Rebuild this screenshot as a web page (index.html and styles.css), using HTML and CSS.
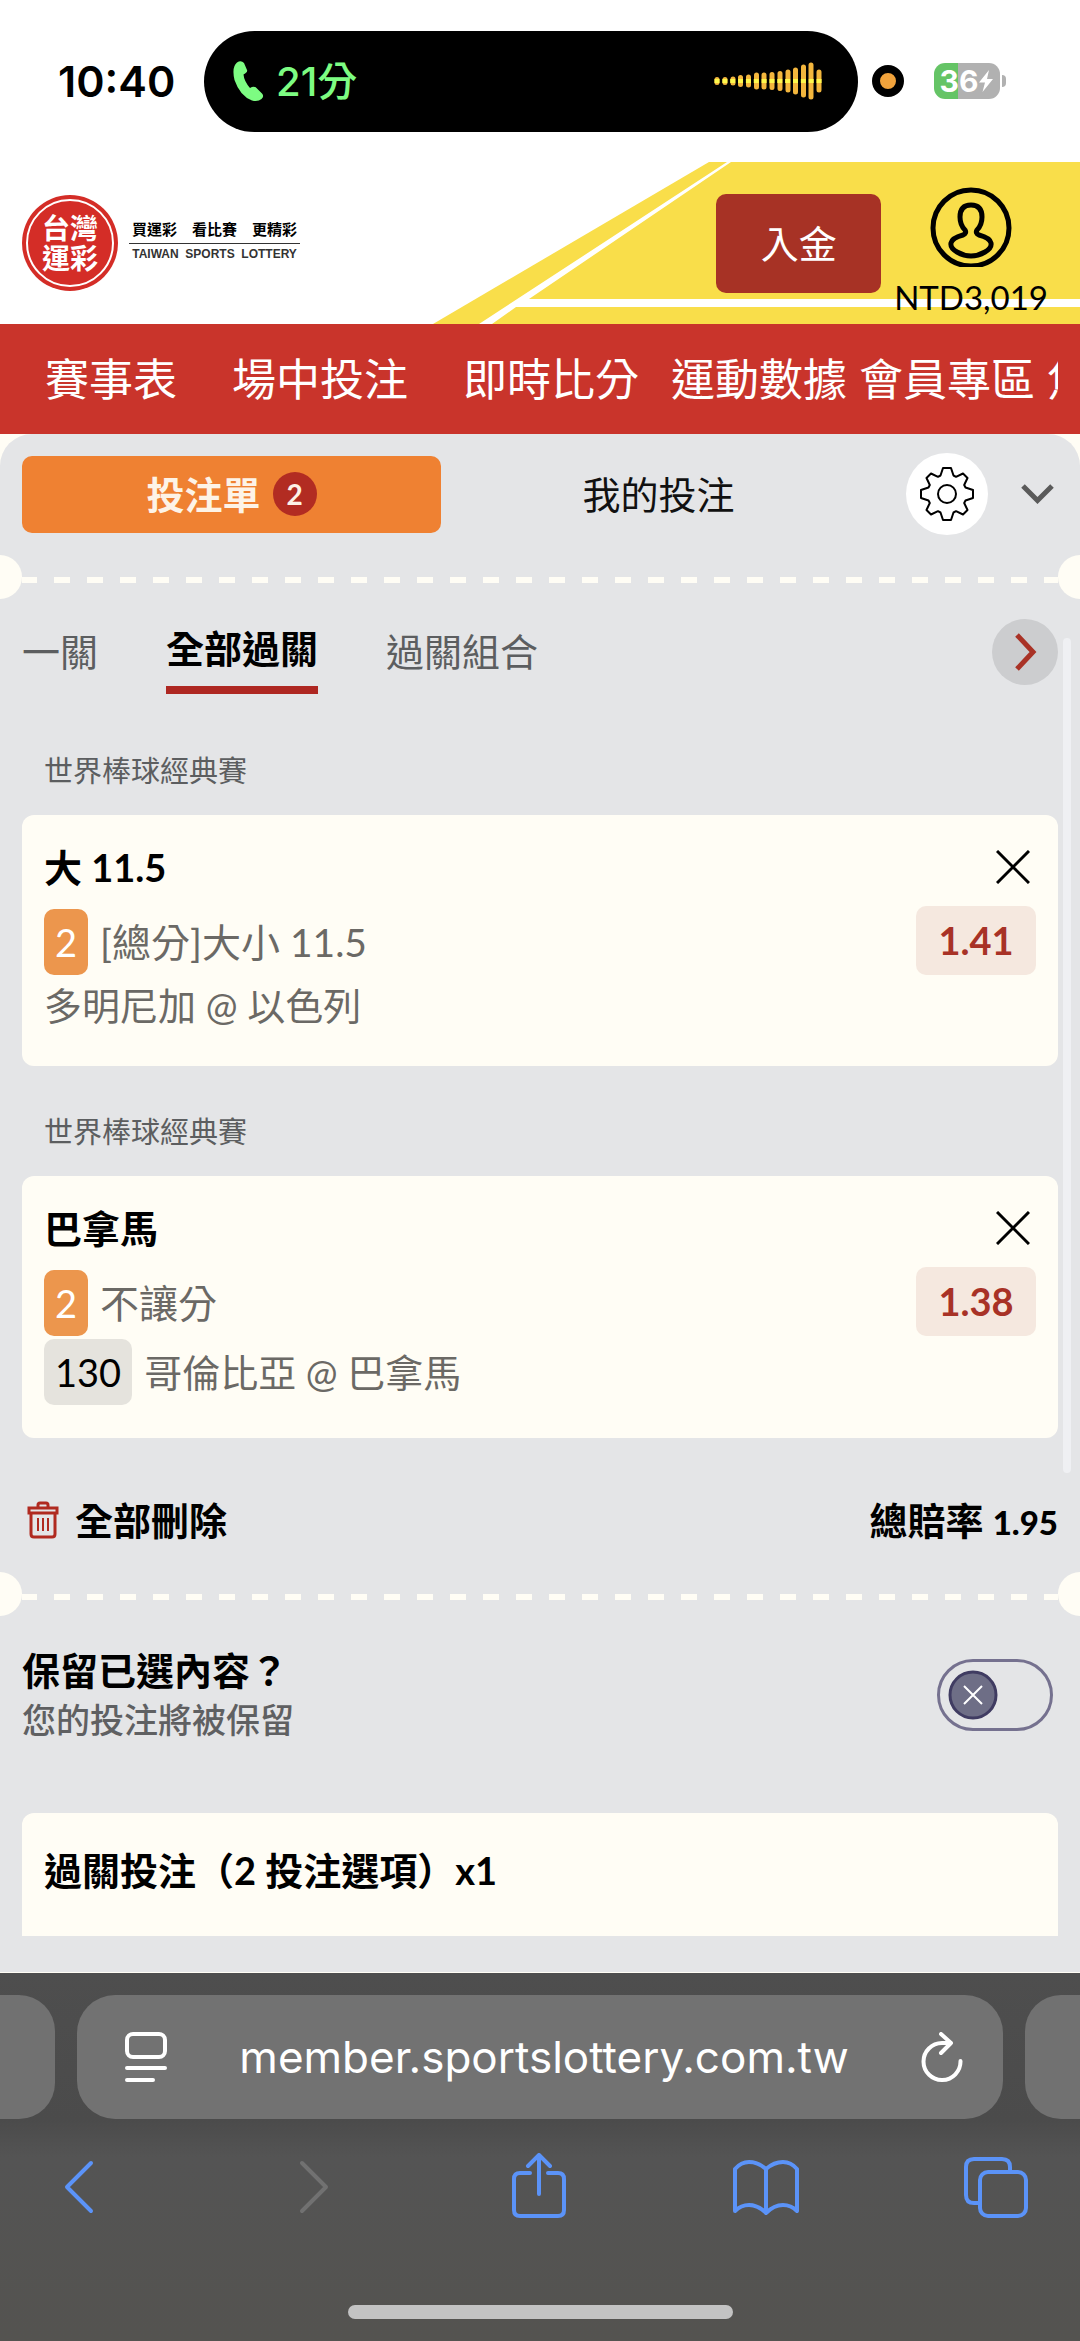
FILE: index.html
```
<!DOCTYPE html>
<html lang="zh-Hant">
<head>
  <meta charset="UTF-8">
  <meta name="viewport" content="width=device-width, initial-scale=1.0">
  <title>台灣運彩 投注單</title>
  <link rel="stylesheet" href="styles.css">
</head>
<body>
  <div class="status-bar">
    <span class="clock">10:40</span>
    <div class="island">
      <svg class="phone-icon" width="31" height="40" viewBox="0 0 31 40"><path fill="#7dfc82" d="M4 1.500Q8-1 11 2L14 9Q15 11 10.500 13.500Q11 20 17 27Q21 24.500 23.500 27L29 32.500Q31.500 35 28.500 38Q25 41 19 39.500Q7 35 1.500 19Q-1.500 6 4 1.500Z"/></svg>
      <span class="call-time">21分</span>
      <svg class="wave" width="108" height="38" viewBox="0 0 108 38">
        <path stroke="#f3b63d" stroke-width="5" stroke-linecap="round" d="M3 17.500v3M11 17.500v3M19 17v4M26.500 15.500v7M34.500 15v8M42.500 13v12M50 13v12M58 12.500v13M66 11.500v15M74 10v18M81.500 8v22M89.500 5v28M97 3v32M105 10v18"/>
        <path stroke="#fdf84c" stroke-width="4" stroke-dasharray="5 2.850" d="M0.500 19H108"/>
      </svg>
    </div>
    <span class="mic-dot"></span>
    <div class="battery"><span>36</span><svg width="16" height="24" viewBox="0 0 16 24"><path fill="#fff" d="M11 1 1 13.500h6L4.500 23 15 10H9Z"/></svg></div>
    <span class="battery-tip"></span>
  </div>

  <header class="site-header">
    <svg class="header-art" width="1080" height="162" viewBox="0 0 1080 162">
      <path fill="#f9de4a" d="M709 0H1080V162H433Z"/>
      <path fill="#fff" d="M727 0h4L529 137H1080v8H516L492 162H479Z"/>
    </svg>
    <a class="logo" href="#">
      <span class="seal"><span class="seal-ring">台灣<br>運彩</span></span>
      <span class="slogan">
        <span class="slogan-zh"><b>買運彩</b><b>看比賽</b><b>更精彩</b></span>
        <span class="slogan-en">TAIWAN&nbsp; SPORTS&nbsp; LOTTERY</span>
      </span>
    </a>
    <button class="deposit">入金</button>
    <a class="account" href="#">
      <svg width="82" height="80" viewBox="0 0 82 80" fill="none" stroke="#000" stroke-width="5">
        <circle cx="41" cy="41" r="38"/>
        <path stroke-linejoin="round" d="M41 18Q30 18 30 30Q30 38 35 43Q37 46 33 48Q22 51 21 56Q20 61 27 65Q34 69 41 69Q48 69 55 65Q62 61 61 56Q60 51 49 48Q45 46 47 43Q52 38 52 30Q52 18 41 18Z"/>
      </svg>
      <span>NTD3,019</span>
    </a>
  </header>

  <nav class="main-nav">
    <div class="nav-scroll">
      <a class="wide" href="#">賽事表</a>
      <a class="wide" href="#">場中投注</a>
      <a href="#">即時比分</a>
      <a href="#">運動數據</a>
      <a href="#">會員專區</a>
      <a href="#">焦點賽事</a>
    </div>
  </nav>

  <main class="slip-wrap">
    <div class="slip">
      <div class="slip-head">
        <div class="slip-tabs">
          <button class="slip-tab active">投注單<span class="count">2</span></button>
          <button class="slip-tab">我的投注</button>
        </div>
        <button class="settings" aria-label="設定">
          <svg width="56" height="56" viewBox="-28 -28 56 56" fill="none" stroke="#000" stroke-width="2" stroke-linejoin="round">
            <circle r="9"/>
            <path d="M-4-26H4L6.500-18.500 9-17.200 16-20.500 20.500-16 17.200-9 18.500-6.500 26-4V4L18.500 6.500 17.200 9 20.500 16 16 20.500 9 17.200 6.500 18.500 4 26H-4L-6.500 18.500-9 17.200-16 20.500-20.500 16-17.200 9-18.500 6.500-26 4V-4L-18.500-6.500-17.200-9-20.500-16-16-20.500-9-17.200-6.500-18.500Z"/>
          </svg>
        </button>
        <button class="collapse" aria-label="收合">
          <svg width="33" height="20" viewBox="0 0 33 20" fill="none" stroke="#5a5a5a" stroke-width="5"><path d="M2 2 16.500 16.500 31 2"/></svg>
        </button>
      </div>

      <div class="perforation"><span></span></div>

      <section class="legs">
        <div class="pass-tabs">
          <button class="pass-tab">一關</button>
          <button class="pass-tab active">全部過關</button>
          <button class="pass-tab">過關組合</button>
          <button class="next" aria-label="下一頁">
            <svg width="24" height="38" viewBox="0 0 24 38" fill="none" stroke="#a93226" stroke-width="5"><path d="M4 2 20 19 4 36"/></svg>
          </button>
        </div>

        <h3 class="league">世界棒球經典賽</h3>
        <article class="leg">
          <div class="leg-info">
            <h4>大 11.5</h4>
            <p class="market"><span class="tag">2</span>[總分]大小 11.5</p>
            <p class="teams">多明尼加 @ 以色列</p>
          </div>
          <div class="leg-side">
            <button class="remove" aria-label="刪除"><svg width="34" height="34" viewBox="0 0 34 34" stroke="#000" stroke-width="3"><path d="M1 1 33 33M33 1 1 33"/></svg></button>
            <span class="odds">1.41</span>
          </div>
        </article>

        <h3 class="league">世界棒球經典賽</h3>
        <article class="leg">
          <div class="leg-info">
            <h4>巴拿馬</h4>
            <p class="market"><span class="tag">2</span>不讓分</p>
            <p class="match"><span class="tag code">130</span>哥倫比亞 @ 巴拿馬</p>
          </div>
          <div class="leg-side">
            <button class="remove" aria-label="刪除"><svg width="34" height="34" viewBox="0 0 34 34" stroke="#000" stroke-width="3"><path d="M1 1 33 33M33 1 1 33"/></svg></button>
            <span class="odds">1.38</span>
          </div>
        </article>
        <span class="scroll-thumb"></span>
      </section>

      <div class="summary">
        <button class="delete-all">
          <svg width="32" height="38" viewBox="0 0 32 38" fill="none" stroke="#b02a20" stroke-width="3">
            <path d="M11 6V4Q11 2 13 2H19Q21 2 21 4V6M2 7H30V12H2ZM4 12V33Q4 36 7 36H25Q28 36 28 33V12"/>
            <path stroke-width="2" d="M11 17V30M16 17V30M21 17V30"/>
          </svg>
          全部刪除
        </button>
        <span class="total">總賠率 <b>1.95</b></span>
      </div>

      <div class="perforation"><span></span></div>

      <div class="keep">
        <label for="keepPicks">
          <strong>保留已選內容？</strong>
          <span>您的投注將被保留</span>
        </label>
        <div class="switch">
          <input type="checkbox" id="keepPicks">
          <svg class="knob" width="50" height="50" viewBox="0 0 50 50">
            <circle cx="25" cy="25" r="23" fill="#6e6e86" stroke="#403c62" stroke-width="3"/>
            <path stroke="#fff" stroke-width="2" d="M16 16 34 34M34 16 16 34"/>
          </svg>
        </div>
      </div>

      <div class="stake"><h4>過關投注（2 投注選項）x1</h4></div>
    </div>
  </main>

  <footer class="browser">
    <div class="address-row">
      <span class="side-page left"></span>
      <div class="address">
        <button aria-label="網頁選單">
          <svg width="42" height="50" viewBox="0 0 42 50" fill="none" stroke="#fff" stroke-width="4" stroke-linecap="round"><rect x="2" y="2" width="38" height="23" rx="6"/><path d="M2 36H40M2 48H28"/></svg>
        </button>
        <span class="url">member.sportslottery.com.tw</span>
        <button aria-label="重新載入">
          <svg width="42" height="50" viewBox="0 0 42 50" fill="none" stroke="#fff" stroke-width="4" stroke-linecap="round" stroke-linejoin="round"><path d="M30 11H21A18.500 18.500 0 1 0 39.500 29M20 2 30 11 20 21"/></svg>
        </button>
      </div>
      <span class="side-page right"></span>
    </div>
    <div class="toolbar">
      <button aria-label="上一頁"><svg width="70" height="66" viewBox="0 0 70 66"><path d="M47 10 23 34 47 58"/></svg></button>
      <button aria-label="下一頁" class="off"><svg width="70" height="66" viewBox="0 0 70 66"><path d="M29 10 53 34 29 58"/></svg></button>
      <button aria-label="分享"><svg width="70" height="66" viewBox="0 0 70 66"><path d="M28 20H18Q12 20 12 26V57Q12 63 18 63H56Q62 63 62 57V26Q62 20 56 20H46M37 41V3M26 13 37 2 48 13"/></svg></button>
      <button aria-label="書籤"><svg width="70" height="66" viewBox="0 0 70 66"><path d="M35 16Q27 9 18 9Q10 9 4 16V58Q10 52 18 52Q27 52 35 60Q43 52 52 52Q60 52 66 58V16Q60 9 52 9Q43 9 35 16V60"/></svg></button>
      <button aria-label="分頁"><svg width="70" height="66" viewBox="0 0 70 66"><path d="M50 17V14Q50 6 42 6H14Q6 6 6 14V42Q6 50 14 50H19"/><rect x="20" y="19" width="46" height="44" rx="8"/></svg></button>
    </div>
    <div class="home-indicator"></div>
  </footer>
</body>
</html>
```

FILE: styles.css
```
* {
  box-sizing: border-box;
}

body {
  margin: 0;
  min-height: 100vh;
  display: flex;
  flex-direction: column;
  background-color: #fff;
  color: #000;
  font-family: Lato, "Noto Sans CJK TC", sans-serif;
  font-size: 38px;
}

button {
  border: none;
  padding: 0;
  background: none;
  color: inherit;
  font: inherit;
  cursor: pointer;
}

a {
  color: inherit;
  text-decoration: none;
}

h3, h4, p {
  margin: 0;
}

svg {
  display: block;
  flex-shrink: 0;
}

/* phone status bar */
.status-bar {
  display: flex;
  align-items: center;
  height: 162px;
  padding: 0 74px 0 58px;
  font-family: Inter, "Noto Sans CJK TC", sans-serif;
}

.clock {
  width: 146px;
  font-size: 43px;
  font-weight: 600;
}

.island {
  flex: 1;
  display: flex;
  align-items: center;
  height: 101px;
  padding: 0 36px 0 29px;
  border-radius: 51px;
  background-color: #000;
}

.call-time {
  margin-left: 12px;
  padding-bottom: 4px;
  color: #7dfc82;
  font-size: 40px;
  font-weight: 500;
}

.wave {
  margin-left: auto;
}

.mic-dot {
  width: 32px;
  height: 32px;
  margin-left: 14px;
  border: 8px solid #000;
  border-radius: 50%;
  background-color: #f1a33c;
}

.battery {
  display: flex;
  align-items: center;
  justify-content: center;
  width: 66px;
  height: 36px;
  margin-left: 30px;
  border-radius: 11px;
  background: linear-gradient(to right, #65c466 36%, #b1b1b1 36%);
  color: #fff;
  font-size: 30px;
  font-weight: 700;
}

.battery-tip {
  width: 4px;
  height: 12px;
  margin-left: 2px;
  border-radius: 0 6px 6px 0;
  background-color: #b1b1b1;
}

/* site header */
.site-header {
  position: relative;
  display: flex;
  align-items: flex-start;
  height: 162px;
  padding: 0 32px 0 22px;
  overflow: hidden;
}

.header-art {
  position: absolute;
  top: 0;
  right: 0;
}

.logo {
  display: flex;
  align-items: center;
  margin-top: 33px;
}

.seal {
  padding: 4px;
  border-radius: 50%;
  background-color: #d42d27;
}

.seal-ring {
  display: flex;
  align-items: center;
  justify-content: center;
  width: 88px;
  height: 88px;
  border: 2px solid #fff;
  border-radius: 50%;
  color: #fff;
  font-size: 28px;
  font-weight: 700;
  line-height: 30px;
}

.slogan {
  margin-left: 11px;
  padding-bottom: 8px;
}

.slogan-zh {
  display: flex;
  gap: 15px;
  padding: 0 3px;
  border-bottom: 1px solid #333;
  font-size: 15px;
  line-height: 28px;
}

.slogan-en {
  display: block;
  text-align: center;
  color: #333;
  font-family: "Liberation Sans", sans-serif;
  font-size: 12px;
  font-weight: 700;
  line-height: 20px;
}

.deposit {
  position: relative;
  width: 165px;
  height: 99px;
  margin: 32px 13px 0 auto;
  padding-bottom: 4px;
  border-radius: 10px;
  background-color: #a73225;
  color: #fff;
}

.account {
  position: relative;
  display: flex;
  flex-direction: column;
  align-items: center;
  margin-top: 25px;
  font-size: 33px;
  line-height: 40px;
}

.account span {
  margin-top: 10px;
}

/* main menu */
.main-nav {
  padding: 0 22px 0 45px;
  background-color: #c9342b;
}

.nav-scroll {
  display: flex;
  gap: 12px;
  overflow: hidden;
  color: #fff;
  font-size: 44px;
  line-height: 110px;
  white-space: nowrap;
}

.nav-scroll a {
  flex-shrink: 0;
}

.nav-scroll .wide {
  margin-right: 43px;
}

.nav-scroll .wide + a:not(.wide) {
  margin-right: 20px;
}

/* bet slip */
.slip-wrap {
  flex: 1;
  background-color: #fffdf5;
}

.slip {
  padding-bottom: 36px;
  border-radius: 32px 32px 0 0;
  background-color: #e4e5e7;
}

.slip-head {
  display: flex;
  align-items: center;
  padding: 19px 26px 20px 22px;
}

.slip-tabs {
  flex: 1;
  display: flex;
  gap: 8px;
}

.slip-tab {
  flex: 1;
  display: flex;
  align-items: center;
  justify-content: center;
  height: 77px;
  padding-bottom: 4px;
  border-radius: 10px;
  color: #111;
}

.slip-tab.active {
  background-color: #ef8132;
  color: #fdf3e7;
  font-weight: 700;
}

.count {
  width: 44px;
  height: 44px;
  margin: 4px 0 0 12px;
  border-radius: 50%;
  background-color: #b22c22;
  font-size: 28px;
  line-height: 44px;
}

.settings {
  display: flex;
  align-items: center;
  justify-content: center;
  width: 82px;
  height: 82px;
  margin: 0 33px 0 38px;
  border-radius: 50%;
  background-color: #fff;
}

.perforation {
  display: flex;
  align-items: center;
}

.perforation::before,
.perforation::after {
  content: "";
  width: 22px;
  height: 44px;
  border-radius: 0 22px 22px 0;
  background-color: #fffdf5;
}

.perforation::after {
  border-radius: 22px 0 0 22px;
}

.perforation span {
  flex: 1;
  height: 6px;
  margin-top: 6px;
  background: repeating-linear-gradient(to right, #fffdf5 0 15px, transparent 15px 32px, #fffdf5 32px 33px);
}

.legs {
  position: relative;
  padding: 20px 22px 0;
}

.pass-tabs {
  display: flex;
  align-items: flex-start;
  gap: 68px;
  margin-bottom: 11px;
}

.pass-tab {
  height: 66px;
  padding-bottom: 6px;
  color: #5c5e60;
}

.pass-tab.active {
  height: 75px;
  padding-bottom: 14px;
  border-bottom: 8px solid #ae2722;
  color: #000;
  font-weight: 700;
}

.next {
  display: flex;
  align-items: center;
  justify-content: center;
  width: 66px;
  height: 66px;
  margin-left: auto;
  border-radius: 50%;
  background-color: #cccdcf;
}

.league {
  padding: 44px 22px 22px;
  color: #5c5e60;
  font-size: 29px;
  font-weight: 400;
  line-height: 44px;
}

.leg {
  display: flex;
  justify-content: space-between;
  padding: 22px 22px 33px;
  border-radius: 12px;
  background-color: #fffdf5;
}

.leg h4 {
  margin-bottom: 12px;
  font-size: 38px;
  line-height: 60px;
}

.market,
.match {
  display: flex;
  gap: 12px;
  color: #6b6965;
  line-height: 66px;
}

.market {
  margin-bottom: 3px;
  font-size: 39px;
}

.teams {
  color: #6b6965;
  line-height: 55px;
}

.tag {
  min-width: 44px;
  padding: 0 11px;
  border-radius: 10px;
  background-color: #ec964d;
  color: #fff;
  font-size: 38px;
}

.tag.code {
  background-color: #e5e3dd;
  color: #000;
}

.leg-side {
  display: flex;
  flex-direction: column;
  align-items: flex-end;
}

.remove {
  margin: 13px 6px 22px 0;
}

.odds {
  width: 120px;
  border-radius: 10px;
  background-color: #f5e8df;
  color: #a83226;
  font-weight: 700;
  line-height: 69px;
  text-align: center;
}

.scroll-thumb {
  position: absolute;
  top: 39px;
  right: 9px;
  bottom: -35px;
  width: 8px;
  border-radius: 4px;
  background-color: #eff0f3;
}

.summary {
  display: flex;
  justify-content: space-between;
  height: 134px;
  padding: 54px 22px 24px;
  font-weight: 700;
  line-height: 56px;
}

.delete-all {
  display: flex;
  align-items: center;
  gap: 16px;
  padding-left: 5px;
}

.total b {
  font-size: 33px;
  line-height: 33px;
}

.keep {
  display: flex;
  align-items: center;
  justify-content: space-between;
  padding: 29px 27px 68px 22px;
  line-height: 50px;
}

.keep strong {
  display: block;
}

.keep label span {
  display: block;
  color: #5f6062;
  font-size: 34px;
  font-weight: 500;
}

.switch {
  position: relative;
  height: 72px;
}

.switch input {
  display: block;
  appearance: none;
  width: 116px;
  height: 72px;
  margin: 0;
  border: 3px solid #75718f;
  border-radius: 36px;
}

.knob {
  position: absolute;
  top: 11px;
  left: 11px;
  pointer-events: none;
}

.stake {
  margin: 0 22px;
  padding: 29px 22px 38px;
  border-radius: 12px 12px 0 0;
  background-color: #fffdf5;
}

.stake h4 {
  font-size: 38px;
  line-height: 56px;
}

/* browser controls */
.browser {
  padding: 22px 0;
  background: linear-gradient(#4e4e4e, #4b4b4b 40%, #545454 50%, #545350);
}

.address-row {
  display: flex;
  gap: 22px;
  height: 124px;
}

.side-page {
  width: 55px;
  background-color: #717171;
}

.side-page.left {
  border-radius: 0 36px 36px 0;
}

.side-page.right {
  border-radius: 36px 0 0 36px;
}

.address {
  flex: 1;
  display: flex;
  align-items: center;
  justify-content: space-between;
  padding: 0 40px 0 48px;
  border-radius: 38px;
  background-color: #727272;
  color: #fff;
}

.url {
  font-family: Inter, sans-serif;
  font-size: 44px;
}

.toolbar {
  display: flex;
  justify-content: space-between;
  padding: 34px 50px 86px 44px;
}

.toolbar svg {
  fill: none;
  stroke: #5b93f8;
  stroke-width: 4;
  stroke-linecap: round;
  stroke-linejoin: round;
}

.toolbar .off svg {
  stroke: #717171;
}

.home-indicator {
  width: 385px;
  height: 14px;
  margin: 0 auto;
  border-radius: 7px;
  background-color: #c3c3c3;
}
```
